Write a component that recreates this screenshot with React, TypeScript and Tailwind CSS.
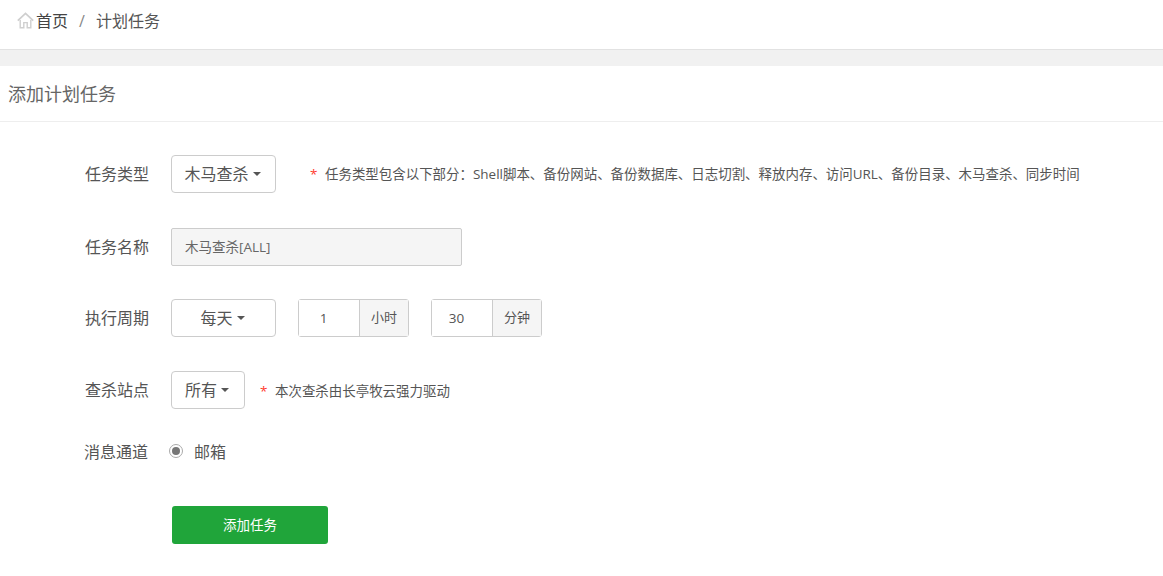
import React from "react";

function Caret() {
  return <span className="ml-1 inline-block h-0 w-0 border-x-[4px] border-t-[4px] border-x-transparent border-t-[#555]" />;
}

function Select({ label, className }: { label: string; className: string }) {
  return (
    <div className={`flex h-[38px] items-center justify-center rounded-[4px] border border-[#ccc] bg-white pr-[2px] text-[16px] leading-none text-[#555] ${className}`}>
      {label}
      <Caret />
    </div>
  );
}

function Row({ label, className, labelClass = "pl-[85px]", children }: { label: string; className: string; labelClass?: string; children: React.ReactNode }) {
  return (
    <div className={`flex items-center ${className}`}>
      <div className={`w-[171px] shrink-0 text-[16px] leading-none whitespace-nowrap text-[#555] ${labelClass}`}>{label}</div>
      {children}
    </div>
  );
}

function Unit({ value, unit }: { value: string; unit: string }) {
  return (
    <div className="flex h-[38px] w-[111px] rounded-[3px] border border-[#ccc] text-[13px] text-[#555]">
      <div className="flex w-[60px] items-center justify-center bg-white pr-[11px] text-[13.5px]">{value}</div>
      <div className="flex flex-1 items-center justify-center border-l border-[#ccc] bg-[#f5f5f5]">{unit}</div>
    </div>
  );
}

function Hint({ text, className }: { text: string; className: string }) {
  return (
    <div className={`flex items-center text-[13.46px] whitespace-nowrap text-[#555] ${className}`}>
      <span className="mr-[10px] w-[5px] text-[#ff3b30]">*</span>
      {text}
    </div>
  );
}

export default function App() {
  return (
    <div className="h-[576px] w-[1163px] overflow-hidden bg-white font-['Open_Sans','Noto_Sans_CJK_SC',sans-serif]">
      <div className="flex h-[50px] items-center border-b border-[#e2e2e2] bg-white pb-[8px] pl-[17px] text-[16px] text-[#555]">
        <svg width="17" height="17" viewBox="0 0 17 17" fill="none" stroke="#cfcfcf" className="mr-[2px] -mt-[1px]">
          <path d="M0.8 8.6 L8.5 1.4 L16.2 8.6" strokeWidth="1.8" />
          <path d="M3.2 8 V15.8 H6.8 V10.6 H10.2 V15.8 H13.8 V8" strokeWidth="1.4" />
        </svg>
        <span className="text-[#444]">首页</span>
        <span className="mx-[11px] text-[#888]">/</span>
        <span>计划任务</span>
      </div>
      <div className="h-[16px] bg-[#f1f1f1]" />
      <div className="flex h-[56px] items-center border-b border-[#eeeeee] pt-[2px] pl-[8px] text-[18px] text-[#666]">添加计划任务</div>

      <Row label="任务类型" className="mt-[33px]">
        <Select label="木马查杀" className="w-[105px]" />
        <Hint text="任务类型包含以下部分：Shell脚本、备份网站、备份数据库、日志切割、释放内存、访问URL、备份目录、木马查杀、同步时间" className="ml-[34px]" />
      </Row>

      <Row label="任务名称" className="mt-[35px]">
        <div className="flex h-[38px] w-[291px] items-center rounded-[2px] border border-[#ccc] bg-[#f5f5f5] pl-[13px] text-[13.5px] text-[#666]">木马查杀[ALL]</div>
      </Row>

      <Row label="执行周期" className="mt-[33px]">
        <Select label="每天" className="w-[105px]" />
        <div className="ml-[22px]"><Unit value="1" unit="小时" /></div>
        <div className="ml-[22px]"><Unit value="30" unit="分钟" /></div>
      </Row>

      <Row label="查杀站点" className="mt-[34px]">
        <Select label="所有" className="w-[74px]" />
        <Hint text="本次查杀由长亭牧云强力驱动" className="mt-[2px] ml-[15px]" />
      </Row>

      <Row label="消息通道" labelClass="pl-[84px]" className="mt-[33px] h-[20px]">
        <span className="-mt-[2px] -ml-[2px] flex h-[14px] w-[14px] items-center justify-center rounded-full border border-[#aaa] bg-white">
          <span className="h-[8px] w-[8px] rounded-full bg-[#777]" />
        </span>
        <span className="ml-[11px] text-[16px] text-[#555]">邮箱</span>
      </Row>

      <div className="mt-[44px] ml-[172px] flex h-[38px] w-[156px] items-center justify-center rounded-[3px] bg-[#20a53a] text-[13.5px] text-white">添加任务</div>
    </div>
  );
}
